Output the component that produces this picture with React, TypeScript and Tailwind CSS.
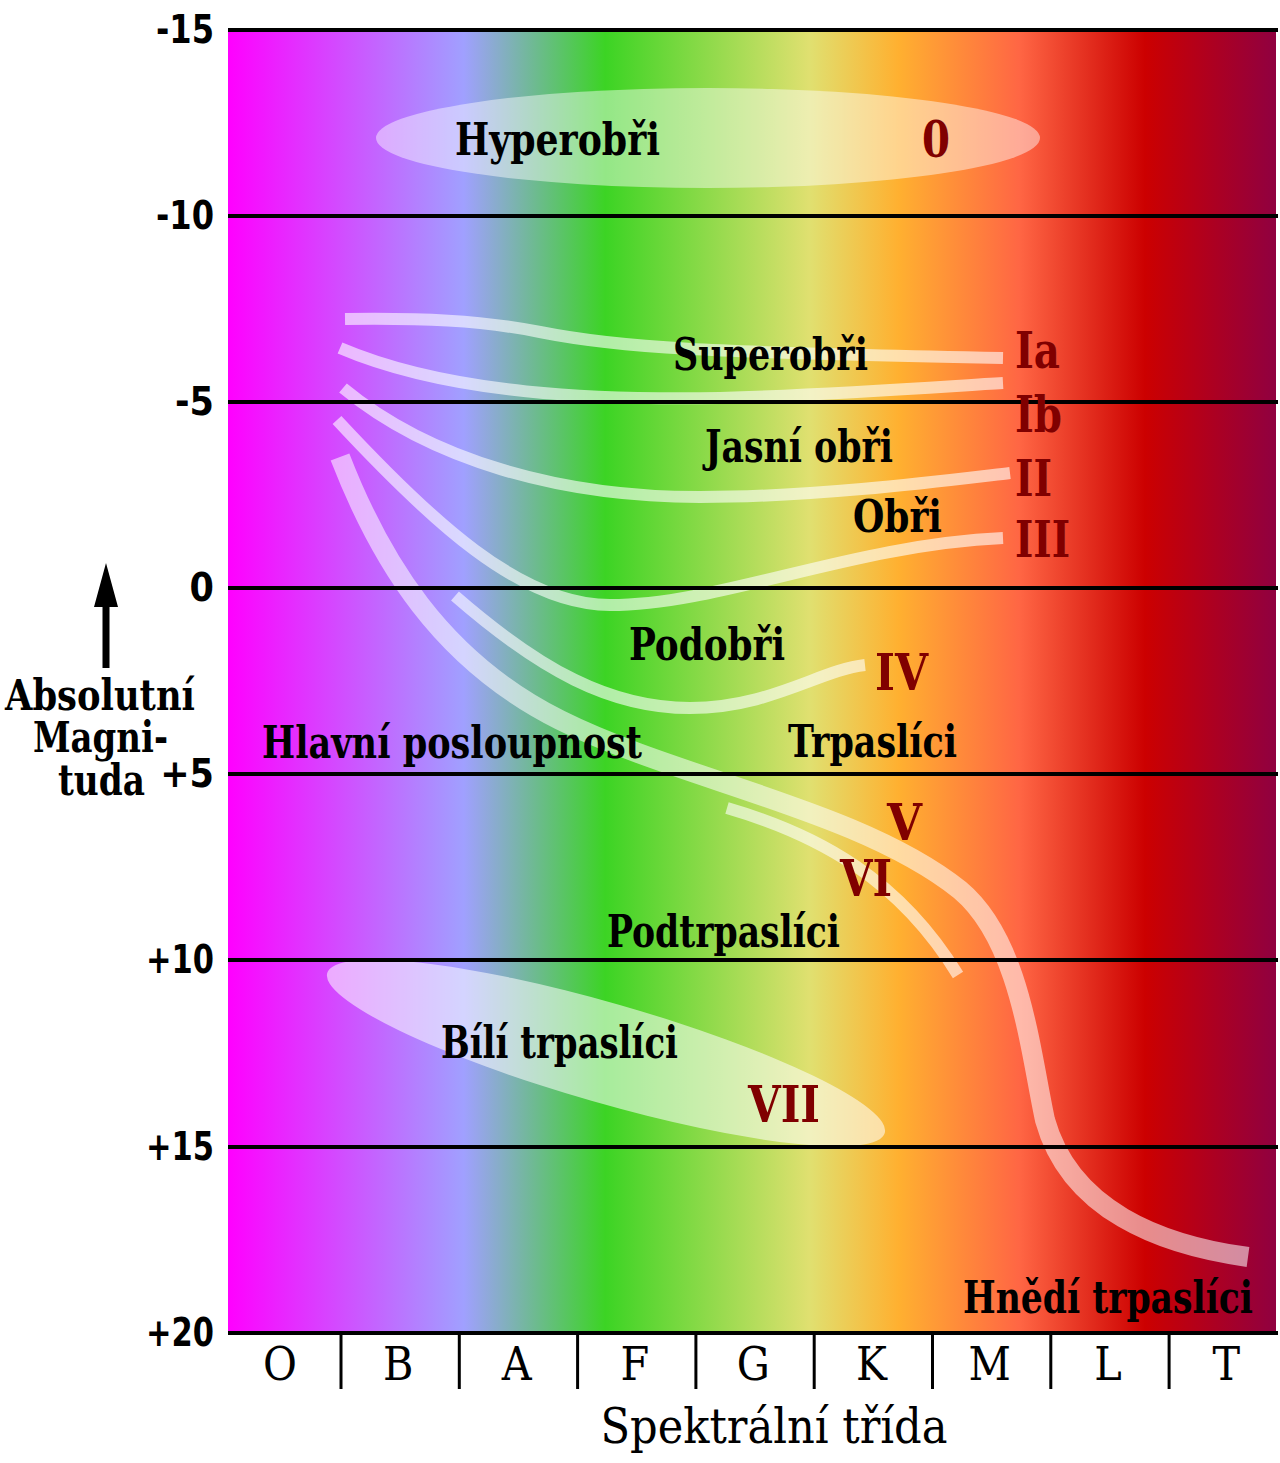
import { FunctionComponent } from "react";

const SERIF = "'DejaVu Serif Condensed', 'DejaVu Serif', serif";
const SANS = "'DejaVu Sans Condensed', 'DejaVu Sans', sans-serif";

const GRID = [
  { y: 30, label: "-15" },
  { y: 216, label: "-10" },
  { y: 402, label: "-5" },
  { y: 588, label: "0" },
  { y: 774, label: "+5" },
  { y: 960, label: "+10" },
  { y: 1147, label: "+15" },
  { y: 1333, label: "+20" },
];

const CLASSES = ["O", "B", "A", "F", "G", "K", "M", "L", "T"];

// black labels: [text, left x, baseline y, width]
const NAMES: [string, number, number, number][] = [
  ["Hyperobři", 455, 155, 205],
  ["Superobři", 673, 370, 195],
  ["Jasní obři", 705, 462, 188],
  ["Obři", 853, 532, 89],
  ["Podobři", 629, 660, 156],
  ["Hlavní posloupnost", 262, 758, 380],
  ["Trpaslíci", 788, 757, 169],
  ["Podtrpaslíci", 607, 947, 233],
  ["Bílí trpaslíci", 441, 1058, 237],
  ["Hnědí trpaslíci", 963, 1313, 290],
];

// luminosity classes (dark red)
const ROMAN: [string, number, number, number][] = [
  ["0", 922, 157, 28],
  ["Ia", 1015, 368, 45],
  ["Ib", 1015, 432, 47],
  ["II", 1015, 496, 37],
  ["III", 1015, 557, 55],
  ["IV", 875, 690, 53],
  ["V", 887, 840, 35],
  ["VI", 840, 896, 52],
  ["VII", 748, 1122, 72],
];

const CURVES = [
  "M345,319 C420,318 480,320 540,332 C620,348 700,352 1003,358",
  "M340,348 C450,395 600,400 720,398 C850,394 950,386 1003,383",
  "M343,388 C430,460 560,497 700,497 C820,497 950,480 1010,473",
  "M337,420 C430,520 520,605 610,605 C720,605 850,545 1003,538",
  "M455,596 C540,670 610,708 690,708 C770,708 820,670 865,665",
  "M727,808 C820,835 900,880 958,975",
];

const tickWidth = (label: string) => {
  if (label.length < 3) return undefined;
  return label.startsWith("+") ? 68 : 58;
};

const App: FunctionComponent = () => (
  <div className="w-[1280px] h-[1463px] bg-white flex flex-col">
    <svg width="1280" height="1395" viewBox="0 0 1280 1395" className="block">
      <defs>
        <linearGradient id="spectrum" x1="0" x2="1" y1="0" y2="0">
          <stop offset="0" stopColor="#ff00ff" />
          <stop offset="0.225" stopColor="#a0a0ff" />
          <stop offset="0.36" stopColor="#3cd424" />
          <stop offset="0.555" stopColor="#e0e070" />
          <stop offset="0.64" stopColor="#ffb030" />
          <stop offset="0.755" stopColor="#ff6644" />
          <stop offset="0.875" stopColor="#cc0000" />
          <stop offset="1" stopColor="#900040" />
        </linearGradient>
      </defs>

      <rect x="228" y="30" width="1048" height="1303" fill="url(#spectrum)" />

      {/* regions */}
      <ellipse cx="708" cy="138" rx="332" ry="50" fill="#fff" fillOpacity="0.45" />
      <ellipse
        cx="606"
        cy="1053"
        rx="290"
        ry="50"
        transform="rotate(16 606 1053)"
        fill="#fff"
        fillOpacity="0.55"
      />
      {CURVES.map((d, i) => (
        <path key={i} d={d} fill="none" stroke="#fff" strokeOpacity="0.6" strokeWidth="12" />
      ))}
      <path
        d="M340,457 C380,560 440,660 560,720 C680,780 860,810 960,890 C1020,940 1030,1050 1045,1120 C1070,1210 1160,1245 1248,1257"
        fill="none"
        stroke="#fff"
        strokeOpacity="0.55"
        strokeWidth="20"
      />

      {/* grid */}
      {GRID.map((g) => (
        <g key={g.label}>
          <line x1="228" x2="1278" y1={g.y} y2={g.y} stroke="#000" strokeWidth="4" />
          <text
            x="214"
            y={g.y + 13}
            textAnchor="end"
            fontFamily={SANS}
            fontStretch="condensed"
            fontWeight="bold"
            fontSize="39"
            textLength={tickWidth(g.label)}
            lengthAdjust="spacingAndGlyphs"
          >
            {g.label}
          </text>
        </g>
      ))}

      {/* spectral axis */}
      {CLASSES.map((c, i) => (
        <g key={c}>
          {i > 0 && (
            <line
              x1={341 + (i - 1) * 118.3}
              x2={341 + (i - 1) * 118.3}
              y1="1333"
              y2="1389"
              stroke="#000"
              strokeWidth="3"
            />
          )}
          <text
            x={280 + i * 118.3}
            y="1380"
            textAnchor="middle"
            fontFamily={SERIF}
            fontStretch="condensed"
            fontSize="46"
          >
            {c}
          </text>
        </g>
      ))}

      {NAMES.map(([t, x, y, w]) => (
        <text
          key={t}
          x={x}
          y={y}
          textLength={w}
          lengthAdjust="spacingAndGlyphs"
          fontFamily={SERIF}
          fontStretch="condensed"
          fontWeight="bold"
          fontSize="45"
        >
          {t}
        </text>
      ))}
      {ROMAN.map(([t, x, y, w]) => (
        <text
          key={t}
          x={x}
          y={y}
          textLength={w}
          lengthAdjust="spacingAndGlyphs"
          fill="#800000"
          fontFamily={SERIF}
          fontStretch="condensed"
          fontWeight="bold"
          fontSize="51"
        >
          {t}
        </text>
      ))}

      {/* magnitude axis title */}
      <polygon points="106,563 94,607 118,607" fill="#000" />
      <rect x="102.5" y="600" width="7" height="68" fill="#000" />
      {(
        [
          ["Absolutní", 5, 710, 190],
          ["Magni-", 33, 752, 135],
          ["tuda", 58, 795, 87],
        ] as [string, number, number, number][]
      ).map(([t, x, y, w]) => (
        <text
          key={t}
          x={x}
          y={y}
          textLength={w}
          lengthAdjust="spacingAndGlyphs"
          fontFamily={SERIF}
          fontStretch="condensed"
          fontWeight="bold"
          fontSize="42"
        >
          {t}
        </text>
      ))}
    </svg>
    <div className="flex justify-center pl-[268px]">
      <span className="text-[48px] leading-none mt-[7px] text-black [font-family:'DejaVu_Serif_Condensed','DejaVu_Serif',serif] font-stretch-condensed">
        Spektrální třída
      </span>
    </div>
  </div>
);

export default App;
